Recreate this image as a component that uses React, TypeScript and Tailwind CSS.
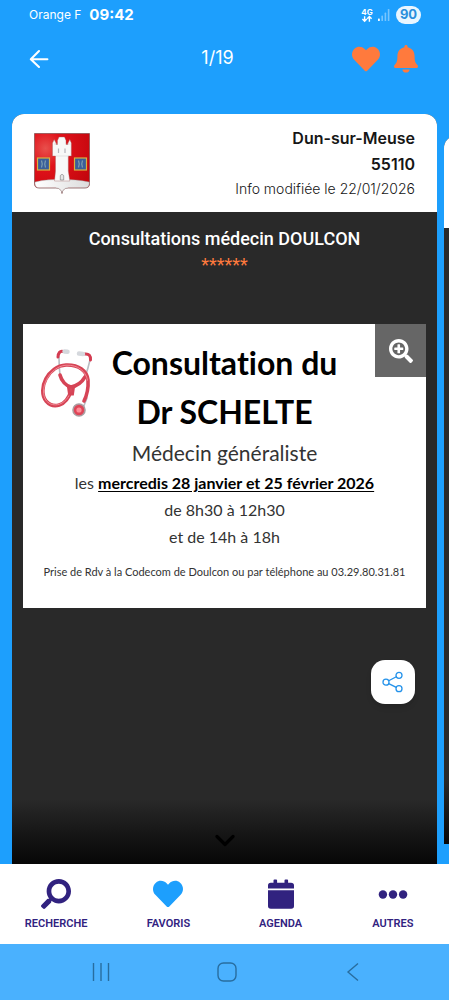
import type { ReactNode } from "react";
import { FaHeart, FaSearch, FaSearchPlus } from "react-icons/fa";

function SignalIcon() {
  return (
    <svg className="h-3 w-3" viewBox="0 0 12 12" fill="#ffffff" aria-hidden="true">
      <rect x="0" y="9.4" width="1.8" height="2.6" rx=".6" />
      <rect x="3.4" y="6.6" width="1.6" height="5.4" rx=".6" opacity=".4" />
      <rect x="6.6" y="3.6" width="1.6" height="8.4" rx=".6" opacity=".4" />
      <rect x="9.8" y="0" width="1.6" height="12" rx=".6" opacity=".4" />
    </svg>
  );
}

function DataIcon() {
  return (
    <svg className="h-4 w-3" viewBox="0 0 12 16" aria-hidden="true">
      <text x="6" y="7.6" fontSize="8" fontWeight="700" fontFamily="Inter, sans-serif" textAnchor="middle" fill="#ffffff">
        4G
      </text>
      <path
        d="M3.6 9.2v5M1.4 12l2.2 2.3L5.8 12M8.4 14.8v-5M6.2 11.8l2.2-2.3 2.2 2.3"
        fill="none"
        stroke="#ffffff"
        strokeWidth="1.4"
      />
    </svg>
  );
}

function BackArrow() {
  return (
    <svg className="h-5 w-5" viewBox="0 0 20 20" fill="none" stroke="#ffffff" strokeWidth="2.1" strokeLinecap="round" strokeLinejoin="round" aria-hidden="true">
      <path d="M10 2 1.8 10.2 10 18M2.2 10.2H18.4" />
    </svg>
  );
}

function BellIcon() {
  return (
    <svg className="h-7 w-6" viewBox="0 0 24 28" fill="#ff7a3d" aria-hidden="true">
      <path d="M12 0c1 0 1.6.7 1.6 1.6v.7c4.5.9 7 4.3 7 9.2 0 4.5.7 6.4 2.6 8.3.5.5.8 1 .8 1.7 0 .9-.6 1.5-1.5 1.5h-21C.6 23 0 22.400 0 21.500c0-.7.3-1.2.8-1.700 1.900-1.900 2.600-3.800 2.600-8.300 0-4.900 2.500-8.300 7-9.200v-.7C10.400.7 11 0 12 0Z" />
      <path d="M8.500 24.400h7c.1 2-1.400 3.200-3.500 3.200s-3.600-1.200-3.500-3.200Z" />
    </svg>
  );
}

function Crest() {
  return (
    <svg className="h-[62px] w-14" viewBox="0 0 56 62" role="img" aria-label="Blason de Dun-sur-Meuse">
      <defs>
        <radialGradient id="crestRed" cx=".2" cy=".25" r=".9">
          <stop offset="0" stopColor="#e8504c" />
          <stop offset=".35" stopColor="#e0121a" />
          <stop offset="1" stopColor="#c4060d" />
        </radialGradient>
        <linearGradient id="crestStone" x1="0" x2="1">
          <stop offset="0" stopColor="#ffffff" />
          <stop offset="1" stopColor="#dcdcdc" />
        </linearGradient>
      </defs>
      <path d="M.5 1.500h55v50q0 4.500-4.500 4.500H34.500C30 56 28.500 58 28 61.500 27.500 58 26 56 21.500 56H5Q.5 56 .5 51.500Z" fill="url(#crestRed)" stroke="#7c4a4a" strokeWidth=".7" />
      <path d="M1 50C10 47.600 19 47.500 28 47.500s18 .4 27.200 2.500v1.500q0 4.200-4.200 4.200H34.500C30.500 56 28.500 58 28 61 27.500 58 25.500 56 21.500 55.700H5Q1 55.700 1 51.500Z" fill="url(#crestStone)" stroke="#999999" strokeWidth=".4" />
      <path d="M20.500 49 21.500 39V24h-3V11l1.700-3.500L22 11v1.500h1.500V8.500L25 5h5.500l1.500 3.500v4h2V11l1.800-3.500L37.300 11v13h-3v15l1.500 10Z" fill="#f8f8f8" stroke="#a26666" strokeWidth=".4" />
      <path d="M20 12h3.500M32.500 12h4M22 24h13" stroke="#cccccc" strokeWidth=".5" />
      <path d="M24.500 16.500v4.500M31 16.500v4.500" stroke="#b4b4bc" strokeWidth="1.200" />
      <path d="M26.300 48v-4.500q1.700-2.500 3.400 0V48Z" fill="#e5e5e5" stroke="#777777" strokeWidth=".6" />
      {[3.5, 40.5].map((x) => (
        <g key={x} transform={`translate(${x} 26)`}>
          <rect width="12" height="12" fill="#395f9a" stroke="#d9b13e" strokeWidth="1.2" />
          <path d="M4 2.500q1.500 3.500 0 7M8 2.500q-1.500 3.500 0 7" fill="none" stroke="#7f9fb0" strokeWidth="1.2" />
        </g>
      ))}
    </svg>
  );
}

function Stethoscope() {
  return (
    <svg className="h-[72px] w-14" viewBox="0 0 56 72" fill="none" strokeLinecap="round" role="img" aria-label="Stéthoscope">
      <path d="M19 9q0 10 1 18M50 12q-2 9-5 17M47 50l-4 10" stroke="#b9bcc2" strokeWidth="1.6" />
      <path d="M23 3.500q-4.500-1-5 5.500M45 6q6-.5 5.500 6" stroke="#d33b50" strokeWidth="3" />
      <path d="M24.500 3.500l3 .3M43 6l-4-.4" stroke="#d5d8dd" strokeWidth="4.500" />
      <g stroke="#d64456" strokeWidth="3.600">
        <path d="M31 43C26 59 13 61 6 53-3 41 8 18 26 17c13-.5 21 6 22 15 .5 7-1 15-4 21" />
        <path d="M20 27c1.500 6 6 11 11 12 6-1 11-5 14-10" />
      </g>
      <path d="M31 43C26 58 13 60 6.500 53-2 42 9 18.500 26 17.200c12-.5 20 6 21.500 15" stroke="#f28a94" strokeWidth="1" />
      <path d="M28.500 39h5l-1 7h-3Z" fill="#dc5261" stroke="#d64456" strokeWidth="3" />
      <circle cx="39" cy="62" r="6" fill="#df4557" stroke="#a99da1" strokeWidth="1.600" />
      <circle cx="39" cy="62" r="2.600" fill="#ff8d98" />
    </svg>
  );
}

function ShareIcon() {
  return (
    <svg className="h-6 w-6" viewBox="0 0 24 24" fill="none" stroke="#2492ea" strokeWidth="1.300" aria-hidden="true">
      <circle cx="5" cy="12.200" r="3" />
      <circle cx="18" cy="5.300" r="3" />
      <circle cx="18" cy="18.700" r="3" />
      <path d="m7.700 10.800 7.600-4.100M7.700 13.600l7.600 3.800" />
    </svg>
  );
}

function CalendarIcon() {
  return (
    <svg className="h-[30px] w-[26px]" viewBox="0 0 26 30" fill="#31227f" aria-hidden="true">
      <path d="M5.500 3.800V1.400q0-.9.9-.9h1.800q.9 0 .9.9v2.400h7.400V1.400q0-.9.9-.9h1.800q.9 0 .9.9v2.400h2.900Q26 3.800 26 6.600v2.900H0V6.600Q0 3.800 2.800 3.800Z" />
      <path d="M0 11.300h26v15.800q0 2.700-2.800 2.700H2.800Q0 29.800 0 27.100Z" />
    </svg>
  );
}

function DotsIcon() {
  return (
    <svg className="h-[30px] w-[30px]" viewBox="0 0 30 30" fill="#31227f" aria-hidden="true">
      <circle cx="4.900" cy="15.500" r="4.200" />
      <circle cx="15" cy="15.500" r="4.200" />
      <circle cx="25.100" cy="15.500" r="4.200" />
    </svg>
  );
}

function StatusBar() {
  return (
    <div className="flex h-[30px] items-center justify-between pr-7 pl-[29px] text-white">
      <div className="flex items-center gap-2">
        <span className="text-xs">Orange F</span>
        <span className="text-[15px] font-bold">09:42</span>
      </div>
      <div className="flex items-center gap-[5px]">
        <DataIcon />
        <SignalIcon />
        <span className="ml-px flex h-[18px] w-[25px] items-center justify-center rounded-full bg-[#e9f6ff] text-[13px] font-bold text-[#2a8fdc]">
          90
        </span>
      </div>
    </div>
  );
}

function Header() {
  return (
    <header className="grid h-[84px] grid-cols-3 items-start pt-[15px] pr-[31px] pl-[17px]">
      <button type="button" aria-label="Retour" className="ml-3 flex h-7 w-7 items-center">
        <BackArrow />
      </button>
      <span className="pt-px text-center text-lg leading-6 text-white">1/19</span>
      <div className="flex items-start justify-end gap-[14px]">
        <button type="button" aria-label="Retirer des favoris">
          <FaHeart className="h-7 w-7 text-[#ff7a3d]" />
        </button>
        <button type="button" aria-label="Notifications">
          <BellIcon />
        </button>
      </div>
    </header>
  );
}

function Poster() {
  return (
    <section className="relative mx-[11px] mt-[47px] bg-white pt-[14px] pb-7 text-center font-['Lato','Noto_Sans',sans-serif] text-[#333333] [font-variant-ligatures:none]">
      <div className="absolute top-6 left-[17px]">
        <Stethoscope />
      </div>
      <button
        type="button"
        aria-label="Agrandir"
        className="absolute top-0 right-0 flex h-[53px] w-[51px] items-center justify-center bg-[#666666] text-white"
      >
        <FaSearchPlus className="h-6 w-6" />
      </button>
      <h3 className="text-[32px] leading-[49px] font-bold text-black">
        Consultation du
        <br />
        Dr SCHELTE
      </h3>
      <p className="text-[21px] leading-[33px]">Médecin généraliste</p>
      <p className="text-base leading-[27px]">
        les <strong className="font-bold text-black underline underline-offset-2">mercredis 28 janvier et 25 février 2026</strong>
      </p>
      <p className="text-base leading-[27px]">de 8h30 à 12h30</p>
      <p className="text-base leading-[27px]">et de 14h à 18h</p>
      <p className="mt-[14px] text-[11px] leading-4">Prise de Rdv à la Codecom de Doulcon ou par téléphone au 03.29.80.31.81</p>
    </section>
  );
}

function InfoCard() {
  return (
    <article className="flex w-[calc(100%-12px)] shrink-0 flex-col overflow-hidden rounded-t-xl bg-[#292929]">
      <div className="flex h-[98px] items-start justify-between bg-white px-[22px] pt-[11px] text-[#161616]">
        <div className="pt-[7px]">
          <Crest />
        </div>
        <div className="text-right">
          <p className="text-base leading-[26px] font-semibold">Dun-sur-Meuse</p>
          <p className="text-base leading-[26px] font-semibold">55110</p>
          <p className="text-sm leading-6 font-light">Info modifiée le 22/01/2026</p>
        </div>
      </div>
      <div className="flex flex-col gap-[2px] pt-[15px] text-center font-['Roboto',sans-serif]">
        <h2 className="text-lg leading-6 font-medium text-white">Consultations médecin DOULCON</h2>
        <p className="text-lg leading-6 text-[#ff7a3d]">******</p>
      </div>
      <Poster />
      <button
        type="button"
        aria-label="Partager"
        className="mt-[52px] mr-[22px] flex h-11 w-11 items-center justify-center self-end rounded-[14px] bg-white shadow-md"
      >
        <ShareIcon />
      </button>
      <div className="mt-auto flex h-16 items-end justify-center bg-linear-to-b from-[#292929] to-[#070707] pb-4">
        <svg className="h-[14px] w-5" viewBox="0 0 20 14" fill="none" stroke="#000000" strokeWidth="3.200" strokeLinecap="round" strokeLinejoin="round" aria-hidden="true">
          <path d="m2 2.500 8 8 8-8" />
        </svg>
      </div>
    </article>
  );
}

function NextCard() {
  return (
    <article className="mt-[22px] mb-5 flex w-[calc(100%-12px)] shrink-0 flex-col overflow-hidden rounded-t-xl bg-[#292929]">
      <div className="h-[92px] bg-white" />
      <div className="mt-auto h-16 bg-linear-to-b from-[#292929] to-[#070707]" />
    </article>
  );
}

function Tab({ label, children }: { label: string; children: ReactNode }) {
  return (
    <a href="#" className="flex flex-col items-center gap-[9px] pt-[15px] text-[#31227f]">
      <span className="flex h-[30px] items-center">{children}</span>
      <span className="font-['Roboto',sans-serif] text-[11px] leading-3 font-semibold">{label}</span>
    </a>
  );
}

export default function App() {
  return (
    <div className="flex min-h-screen flex-col overflow-hidden bg-[#1d9ffd] font-['Inter',sans-serif]">
      <StatusBar />
      <Header />
      <main className="flex flex-1 gap-[7px] overflow-hidden pl-3">
        <InfoCard />
        <NextCard />
      </main>
      <nav className="grid h-20 grid-cols-4 bg-white">
        <Tab label="RECHERCHE">
          <FaSearch className="h-[30px] w-[30px] -scale-x-100" />
        </Tab>
        <Tab label="FAVORIS">
          <FaHeart className="h-[30px] w-[30px] text-[#1d9ffd]" />
        </Tab>
        <Tab label="AGENDA">
          <CalendarIcon />
        </Tab>
        <Tab label="AUTRES">
          <DotsIcon />
        </Tab>
      </nav>
      <div className="flex h-14 items-center justify-between bg-[#4ab1fe] pr-[90px] pl-[91px]">
        <button type="button" aria-label="Applications récentes">
          <svg className="h-5 w-5" viewBox="0 0 20 20" stroke="#286d9f" strokeWidth="1.400" aria-hidden="true">
            <path d="M2.500 1v18M10 1v18M17.500 1v18" />
          </svg>
        </button>
        <button type="button" aria-label="Accueil">
          <svg className="h-5 w-5" viewBox="0 0 20 20" fill="none" stroke="#286d9f" strokeWidth="1.400" aria-hidden="true">
            <rect x="1" y="1" width="18" height="18" rx="5.500" />
          </svg>
        </button>
        <button type="button" aria-label="Précédent">
          <svg className="h-5 w-4" viewBox="0 0 16 20" fill="none" stroke="#286d9f" strokeWidth="1.400" aria-hidden="true">
            <path d="M15 1.500 5 10l10 8.500" />
          </svg>
        </button>
      </div>
    </div>
  );
}
